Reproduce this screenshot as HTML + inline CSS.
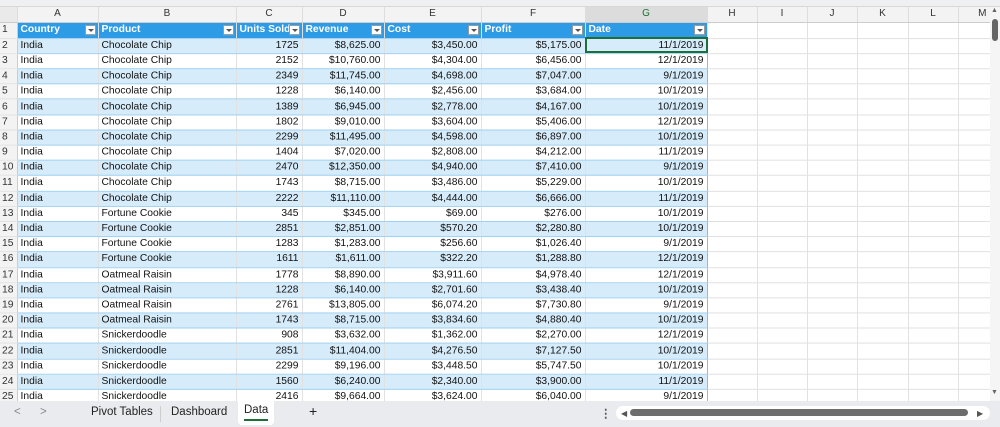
<!DOCTYPE html><html><head><style>
*{margin:0;padding:0;box-sizing:border-box}
body{width:1000px;height:427px;overflow:hidden;background:#fff;font-family:"Liberation Sans",sans-serif;font-size:10.3px;color:#111;position:relative}
.top{position:absolute;left:0;top:0;width:1000px;height:7px;background:#eef0f2;border-bottom:1px solid #d8d8d8}
table{position:absolute;left:0;border-collapse:collapse;table-layout:fixed}
td{height:15.2px;padding:0 3px;white-space:nowrap;overflow:hidden;line-height:14px;border-right:1px solid #e1e1e1;border-bottom:1px solid #e1e1e1}
#hd{top:7px}
#hd td{height:15px;text-align:center;color:#333;background:#f3f3f3;border-right:1px solid #ddd;border-bottom:1px solid #ccc;font-size:10px}
#hd td.sel{background:#dcdcdc;color:#1e6e3a}
#bd{top:22.5px;transform:scaleY(1.005);transform-origin:0 0}
td.n{text-align:left;color:#333;background:#f3f3f3;padding-left:2px;border-right:1px solid #ccc}
tr td.t{border-bottom:1px solid #9fd0f0}
tr.b td.t{background:#d6ecfa}
tr.h td.t{background:#2e9be6;color:#fff;font-weight:bold;position:relative}
td.r{text-align:right}
td.tr{border-right:1px solid #7fc0ee}
.dd{position:absolute;right:2px;top:2px;width:11px;height:10px;background:#fff;border:1px solid #999}
.dd:after{content:"";position:absolute;left:2px;top:3px;border-left:3px solid transparent;border-right:3px solid transparent;border-top:3px solid #555}
.selc{position:absolute;left:585px;top:37px;width:123px;height:16px;border:2px solid #1e6e3a}
.bot{position:absolute;left:0;top:401px;width:1000px;height:26px;background:#e9ebee}
.tab{position:absolute;top:406px;font-size:11.5px;color:#222}
.vs{position:absolute;left:990px;top:7px;width:10px;height:394px;background:#f5f5f5}
</style></head><body>
<div class="top"></div>
<table id="hd"><colgroup><col style="width:17px"><col style="width:81px"><col style="width:138px"><col style="width:66px"><col style="width:82px"><col style="width:97px"><col style="width:104px"><col style="width:122px"><col style="width:50px"><col style="width:50px"><col style="width:50px"><col style="width:51px"><col style="width:50px"><col style="width:32px"></colgroup>
<tr><td style="background:#eaeaea"></td><td>A</td><td>B</td><td>C</td><td>D</td><td>E</td><td>F</td><td class="sel">G</td><td>H</td><td>I</td><td>J</td><td>K</td><td>L</td><td style="text-align:right">M</td></tr></table>
<table id="bd"><colgroup><col style="width:17px"><col style="width:81px"><col style="width:138px"><col style="width:66px"><col style="width:82px"><col style="width:97px"><col style="width:104px"><col style="width:122px"><col style="width:50px"><col style="width:50px"><col style="width:50px"><col style="width:51px"><col style="width:50px"><col style="width:32px"></colgroup>
<tr class="h"><td class="n">1</td><td class="t">Country<span class="dd"></span></td><td class="t">Product<span class="dd"></span></td><td class="t">Units Sold<span class="dd"></span></td><td class="t">Revenue<span class="dd"></span></td><td class="t">Cost<span class="dd"></span></td><td class="t">Profit<span class="dd"></span></td><td class="t">Date<span class="dd"></span></td><td></td><td></td><td></td><td></td><td></td><td></td></tr>
<tr class="b"><td class="n">2</td><td class="t">India</td><td class="t">Chocolate Chip</td><td class="t r">1725</td><td class="t r">$8,625.00</td><td class="t r">$3,450.00</td><td class="t r">$5,175.00</td><td class="t r tr">11/1/2019</td><td></td><td></td><td></td><td></td><td></td><td></td></tr>
<tr><td class="n">3</td><td class="t">India</td><td class="t">Chocolate Chip</td><td class="t r">2152</td><td class="t r">$10,760.00</td><td class="t r">$4,304.00</td><td class="t r">$6,456.00</td><td class="t r tr">12/1/2019</td><td></td><td></td><td></td><td></td><td></td><td></td></tr>
<tr class="b"><td class="n">4</td><td class="t">India</td><td class="t">Chocolate Chip</td><td class="t r">2349</td><td class="t r">$11,745.00</td><td class="t r">$4,698.00</td><td class="t r">$7,047.00</td><td class="t r tr">9/1/2019</td><td></td><td></td><td></td><td></td><td></td><td></td></tr>
<tr><td class="n">5</td><td class="t">India</td><td class="t">Chocolate Chip</td><td class="t r">1228</td><td class="t r">$6,140.00</td><td class="t r">$2,456.00</td><td class="t r">$3,684.00</td><td class="t r tr">10/1/2019</td><td></td><td></td><td></td><td></td><td></td><td></td></tr>
<tr class="b"><td class="n">6</td><td class="t">India</td><td class="t">Chocolate Chip</td><td class="t r">1389</td><td class="t r">$6,945.00</td><td class="t r">$2,778.00</td><td class="t r">$4,167.00</td><td class="t r tr">10/1/2019</td><td></td><td></td><td></td><td></td><td></td><td></td></tr>
<tr><td class="n">7</td><td class="t">India</td><td class="t">Chocolate Chip</td><td class="t r">1802</td><td class="t r">$9,010.00</td><td class="t r">$3,604.00</td><td class="t r">$5,406.00</td><td class="t r tr">12/1/2019</td><td></td><td></td><td></td><td></td><td></td><td></td></tr>
<tr class="b"><td class="n">8</td><td class="t">India</td><td class="t">Chocolate Chip</td><td class="t r">2299</td><td class="t r">$11,495.00</td><td class="t r">$4,598.00</td><td class="t r">$6,897.00</td><td class="t r tr">10/1/2019</td><td></td><td></td><td></td><td></td><td></td><td></td></tr>
<tr><td class="n">9</td><td class="t">India</td><td class="t">Chocolate Chip</td><td class="t r">1404</td><td class="t r">$7,020.00</td><td class="t r">$2,808.00</td><td class="t r">$4,212.00</td><td class="t r tr">11/1/2019</td><td></td><td></td><td></td><td></td><td></td><td></td></tr>
<tr class="b"><td class="n">10</td><td class="t">India</td><td class="t">Chocolate Chip</td><td class="t r">2470</td><td class="t r">$12,350.00</td><td class="t r">$4,940.00</td><td class="t r">$7,410.00</td><td class="t r tr">9/1/2019</td><td></td><td></td><td></td><td></td><td></td><td></td></tr>
<tr><td class="n">11</td><td class="t">India</td><td class="t">Chocolate Chip</td><td class="t r">1743</td><td class="t r">$8,715.00</td><td class="t r">$3,486.00</td><td class="t r">$5,229.00</td><td class="t r tr">10/1/2019</td><td></td><td></td><td></td><td></td><td></td><td></td></tr>
<tr class="b"><td class="n">12</td><td class="t">India</td><td class="t">Chocolate Chip</td><td class="t r">2222</td><td class="t r">$11,110.00</td><td class="t r">$4,444.00</td><td class="t r">$6,666.00</td><td class="t r tr">11/1/2019</td><td></td><td></td><td></td><td></td><td></td><td></td></tr>
<tr><td class="n">13</td><td class="t">India</td><td class="t">Fortune Cookie</td><td class="t r">345</td><td class="t r">$345.00</td><td class="t r">$69.00</td><td class="t r">$276.00</td><td class="t r tr">10/1/2019</td><td></td><td></td><td></td><td></td><td></td><td></td></tr>
<tr class="b"><td class="n">14</td><td class="t">India</td><td class="t">Fortune Cookie</td><td class="t r">2851</td><td class="t r">$2,851.00</td><td class="t r">$570.20</td><td class="t r">$2,280.80</td><td class="t r tr">10/1/2019</td><td></td><td></td><td></td><td></td><td></td><td></td></tr>
<tr><td class="n">15</td><td class="t">India</td><td class="t">Fortune Cookie</td><td class="t r">1283</td><td class="t r">$1,283.00</td><td class="t r">$256.60</td><td class="t r">$1,026.40</td><td class="t r tr">9/1/2019</td><td></td><td></td><td></td><td></td><td></td><td></td></tr>
<tr class="b"><td class="n">16</td><td class="t">India</td><td class="t">Fortune Cookie</td><td class="t r">1611</td><td class="t r">$1,611.00</td><td class="t r">$322.20</td><td class="t r">$1,288.80</td><td class="t r tr">12/1/2019</td><td></td><td></td><td></td><td></td><td></td><td></td></tr>
<tr><td class="n">17</td><td class="t">India</td><td class="t">Oatmeal Raisin</td><td class="t r">1778</td><td class="t r">$8,890.00</td><td class="t r">$3,911.60</td><td class="t r">$4,978.40</td><td class="t r tr">12/1/2019</td><td></td><td></td><td></td><td></td><td></td><td></td></tr>
<tr class="b"><td class="n">18</td><td class="t">India</td><td class="t">Oatmeal Raisin</td><td class="t r">1228</td><td class="t r">$6,140.00</td><td class="t r">$2,701.60</td><td class="t r">$3,438.40</td><td class="t r tr">10/1/2019</td><td></td><td></td><td></td><td></td><td></td><td></td></tr>
<tr><td class="n">19</td><td class="t">India</td><td class="t">Oatmeal Raisin</td><td class="t r">2761</td><td class="t r">$13,805.00</td><td class="t r">$6,074.20</td><td class="t r">$7,730.80</td><td class="t r tr">9/1/2019</td><td></td><td></td><td></td><td></td><td></td><td></td></tr>
<tr class="b"><td class="n">20</td><td class="t">India</td><td class="t">Oatmeal Raisin</td><td class="t r">1743</td><td class="t r">$8,715.00</td><td class="t r">$3,834.60</td><td class="t r">$4,880.40</td><td class="t r tr">10/1/2019</td><td></td><td></td><td></td><td></td><td></td><td></td></tr>
<tr><td class="n">21</td><td class="t">India</td><td class="t">Snickerdoodle</td><td class="t r">908</td><td class="t r">$3,632.00</td><td class="t r">$1,362.00</td><td class="t r">$2,270.00</td><td class="t r tr">12/1/2019</td><td></td><td></td><td></td><td></td><td></td><td></td></tr>
<tr class="b"><td class="n">22</td><td class="t">India</td><td class="t">Snickerdoodle</td><td class="t r">2851</td><td class="t r">$11,404.00</td><td class="t r">$4,276.50</td><td class="t r">$7,127.50</td><td class="t r tr">10/1/2019</td><td></td><td></td><td></td><td></td><td></td><td></td></tr>
<tr><td class="n">23</td><td class="t">India</td><td class="t">Snickerdoodle</td><td class="t r">2299</td><td class="t r">$9,196.00</td><td class="t r">$3,448.50</td><td class="t r">$5,747.50</td><td class="t r tr">10/1/2019</td><td></td><td></td><td></td><td></td><td></td><td></td></tr>
<tr class="b"><td class="n">24</td><td class="t">India</td><td class="t">Snickerdoodle</td><td class="t r">1560</td><td class="t r">$6,240.00</td><td class="t r">$2,340.00</td><td class="t r">$3,900.00</td><td class="t r tr">11/1/2019</td><td></td><td></td><td></td><td></td><td></td><td></td></tr>
<tr><td class="n">25</td><td class="t">India</td><td class="t">Snickerdoodle</td><td class="t r">2416</td><td class="t r">$9,664.00</td><td class="t r">$3,624.00</td><td class="t r">$6,040.00</td><td class="t r tr">9/1/2019</td><td></td><td></td><td></td><td></td><td></td><td></td></tr>
</table>
<div class="selc"></div>
<div class="vs"><div style="position:absolute;left:1px;top:0;font-size:7px;color:#666">▲</div><div style="position:absolute;left:2px;top:12px;width:6px;height:22px;background:#666;border-radius:3px"></div><div style="position:absolute;left:1px;top:382px;font-size:7px;color:#666">▼</div></div>
<div class="bot"></div>
<div class="tab" style="left:14px;color:#888">&lt;</div><div class="tab" style="left:40px;color:#888">&gt;</div>
<div class="tab" style="left:91px">Pivot Tables</div>
<div style="position:absolute;left:160px;top:406px;width:1px;height:16px;background:#ccc"></div>
<div class="tab" style="left:171px">Dashboard</div>
<div style="position:absolute;left:238px;top:401px;width:36px;height:24px;background:#fff;border-radius:0 0 4px 4px"></div>
<div class="tab" style="left:244px;top:404px">Data</div>
<div style="position:absolute;left:244px;top:419px;width:24px;height:2px;background:#1e6e3a"></div>
<div class="tab" style="left:309px;font-size:14px;top:403px">+</div>
<div class="tab" style="left:600px;color:#555;font-weight:bold">⋮</div>
<div style="position:absolute;left:616px;top:406px;width:374px;height:14px;background:#fff;border-radius:7px"></div>
<div style="position:absolute;left:621px;top:409px;font-size:8px;color:#555">◀</div>
<div style="position:absolute;left:630px;top:409px;width:338px;height:7px;background:#6d6d6d;border-radius:4px"></div>
<div style="position:absolute;left:977px;top:409px;font-size:8px;color:#555">▶</div>
</body></html>
